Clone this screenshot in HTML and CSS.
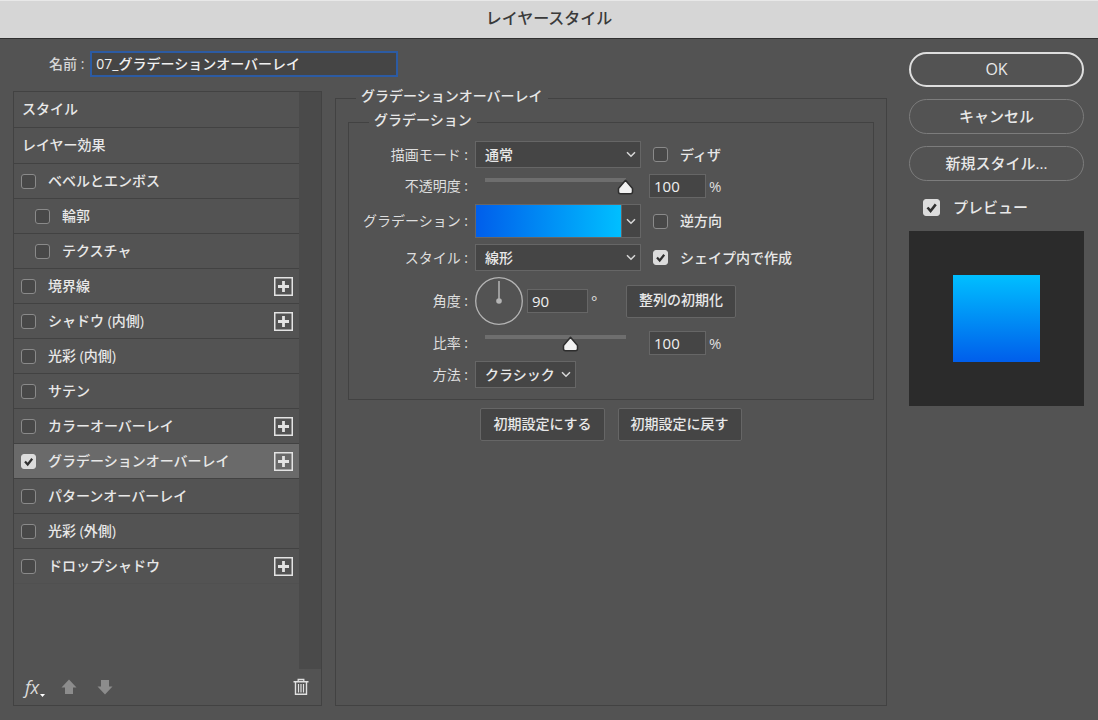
FILE: index.html
```html
<!DOCTYPE html>
<html lang="ja">
<head>
    <meta charset="UTF-8">
    <meta name="viewport" content="width=device-width, initial-scale=1.0">
    <title>レイヤースタイル</title>
    <link rel="stylesheet" href="styles.css">
</head>
<body>

    <!-- Shared icons -->
    <svg class="symbols" aria-hidden="true">
        <symbol id="plus" viewBox="0 0 19 19">
            <rect x="0.75" y="0.75" width="17.5" height="17.5" fill="none" stroke="#e4e4e4" stroke-width="1.5"/>
            <path d="M9.5 4v11M4 9.5h11" stroke="#e4e4e4" stroke-width="2.8"/>
        </symbol>
    </svg>

    <!-- Title bar -->
    <header class="titlebar">
        <h1>レイヤースタイル</h1>
    </header>

    <div class="dialog">
        <div class="main">
            <div class="name-row">
                <label for="styleName">名前 :</label>
                <input type="text" id="styleName" class="name-input" value="07_グラデーションオーバーレイ">
            </div>

            <div class="panes">
                <!-- Effect list -->
                <div class="effects">
                    <div class="effects-body">
                        <ul class="effect-list">
                            <li class="heading">スタイル</li>
                            <li class="heading">レイヤー効果</li>
                            <li><label><input type="checkbox" class="check">ベベルとエンボス</label></li>
                            <li class="child"><label><input type="checkbox" class="check">輪郭</label></li>
                            <li class="child"><label><input type="checkbox" class="check">テクスチャ</label></li>
                            <li><label><input type="checkbox" class="check">境界線</label><button class="add" aria-label="境界線を追加"><svg><use href="#plus"/></svg></button></li>
                            <li><label><input type="checkbox" class="check">シャドウ (内側)</label><button class="add" aria-label="シャドウ (内側)を追加"><svg><use href="#plus"/></svg></button></li>
                            <li><label><input type="checkbox" class="check">光彩 (内側)</label></li>
                            <li><label><input type="checkbox" class="check">サテン</label></li>
                            <li><label><input type="checkbox" class="check">カラーオーバーレイ</label><button class="add" aria-label="カラーオーバーレイを追加"><svg><use href="#plus"/></svg></button></li>
                            <li class="selected"><label><input type="checkbox" class="check" checked>グラデーションオーバーレイ</label><button class="add" aria-label="グラデーションオーバーレイを追加"><svg><use href="#plus"/></svg></button></li>
                            <li><label><input type="checkbox" class="check">パターンオーバーレイ</label></li>
                            <li><label><input type="checkbox" class="check">光彩 (外側)</label></li>
                            <li><label><input type="checkbox" class="check">ドロップシャドウ</label><button class="add" aria-label="ドロップシャドウを追加"><svg><use href="#plus"/></svg></button></li>
                        </ul>
                        <div class="gutter"></div>
                    </div>
                    <div class="toolbar">
                        <button class="tool fx" aria-label="効果メニュー">
                            <span>fx</span>
                            <svg width="5" height="3" viewBox="0 0 5 3"><path d="M0 0h5L2.500 3z" fill="#fff"/></svg>
                        </button>
                        <button class="tool" aria-label="上へ">
                            <svg width="16" height="16" viewBox="0 0 16 16"><path d="M8 0.500L15.500 8.500H12V15H4V8.500H0.500z" fill="#8c8c8c"/></svg>
                        </button>
                        <button class="tool" aria-label="下へ">
                            <svg width="16" height="16" viewBox="0 0 16 16"><path d="M8 15.500L15.500 7.500H12V1H4V7.500H0.500z" fill="#8c8c8c"/></svg>
                        </button>
                        <button class="tool trash" aria-label="削除">
                            <svg width="16" height="18" viewBox="0 0 16 18" fill="none" stroke="#e0e0e0">
                                <path d="M0.500 3.700H15.500M2.500 4V16.300H13.500V4" stroke-width="1.400"/>
                                <path d="M5.200 3.500V1.500H10.800V3.500" stroke-width="1.300"/>
                                <path d="M5.500 6v8.500M8 6v8.500M10.500 6v8.500" stroke-width="1.200"/>
                            </svg>
                        </button>
                    </div>
                </div>

                <!-- Settings -->
                <fieldset class="settings">
                    <legend>グラデーションオーバーレイ</legend>

                    <fieldset class="group">
                        <legend>グラデーション</legend>

                        <div class="row">
                            <label class="caption" for="blend">描画モード :</label>
                            <div class="control">
                                <select id="blend" class="select"><option>通常</option></select>
                            </div>
                            <label class="option"><input type="checkbox" class="check">ディザ</label>
                        </div>

                        <div class="row">
                            <label class="caption" for="opacity">不透明度 :</label>
                            <div class="control">
                                <input type="range" id="opacity" class="slider" min="0" max="100" value="100">
                            </div>
                            <input type="text" class="number" value="100" aria-label="不透明度 (%)">
                            <span class="unit">%</span>
                        </div>

                        <div class="row">
                            <span class="caption">グラデーション :</span>
                            <div class="control gradient">
                                <button class="swatch" aria-label="グラデーションを編集"></button>
                                <button class="swatch-menu" aria-label="グラデーションを選択">
                                    <svg width="10" height="7" viewBox="0 0 10 7"><path d="M1 1.200l4 4 4-4" fill="none" stroke="#d8d8d8" stroke-width="1.500"/></svg>
                                </button>
                            </div>
                            <label class="option"><input type="checkbox" class="check">逆方向</label>
                        </div>

                        <div class="row">
                            <label class="caption" for="gradStyle">スタイル :</label>
                            <div class="control">
                                <select id="gradStyle" class="select"><option>線形</option></select>
                            </div>
                            <label class="option"><input type="checkbox" class="check" checked>シェイプ内で作成</label>
                        </div>

                        <div class="row">
                            <label class="caption" for="angle">角度 :</label>
                            <div class="angle">
                                <svg width="48" height="48" viewBox="0 0 48 48">
                                    <circle cx="24" cy="24" r="23.300" fill="none" stroke="#b4b4b4" stroke-width="1.300"/>
                                    <path d="M24 24V4" stroke="#b4b4b4" stroke-width="1.500"/>
                                    <circle cx="24" cy="24" r="2.800" fill="#b4b4b4"/>
                                </svg>
                                <input type="text" id="angle" class="number" value="90">
                                <span class="unit">°</span>
                            </div>
                            <button class="btn">整列の初期化</button>
                        </div>

                        <div class="row">
                            <label class="caption" for="scale">比率 :</label>
                            <div class="control">
                                <input type="range" id="scale" class="slider" min="0" max="100" value="61">
                            </div>
                            <input type="text" class="number" value="100" aria-label="比率 (%)">
                            <span class="unit">%</span>
                        </div>

                        <div class="row">
                            <label class="caption" for="method">方法 :</label>
                            <div class="control">
                                <select id="method" class="select short"><option>クラシック</option></select>
                            </div>
                        </div>
                    </fieldset>

                    <div class="defaults">
                        <button class="btn">初期設定にする</button>
                        <button class="btn">初期設定に戻す</button>
                    </div>
                </fieldset>
            </div>
        </div>

        <!-- Actions -->
        <div class="actions">
            <button class="pill primary">OK</button>
            <button class="pill">キャンセル</button>
            <button class="pill">新規スタイル...</button>
            <label class="preview-toggle"><input type="checkbox" class="check" checked>プレビュー</label>
            <div class="preview"><div class="preview-shape"></div></div>
        </div>
    </div>

</body>
</html>
```
FILE: styles.css
```css
* {
    margin: 0;
    padding: 0;
    box-sizing: border-box;
}

body {
    display: flex;
    flex-direction: column;
    min-height: 100vh;
    font-family: "Open Sans", "Noto Sans CJK JP", sans-serif;
    font-size: 14px;
    font-weight: 500;
    line-height: 20px;
    color: #e8e8e8;
    background-color: #535353;
}

button,
input,
select {
    font: inherit;
    color: inherit;
}

.symbols {
    display: none;
}

/* Title bar */
.titlebar {
    height: 39px;
    background-color: #d6d6d6;
    border-top: 1px solid #e8e8e8;
    border-bottom: 1px solid #303030;
    text-align: center;
}

.titlebar h1 {
    font-size: 16px;
    font-weight: 500;
    line-height: 34px;
    color: #3a3a3a;
}

/* Dialog layout */
.dialog {
    flex: 1;
    display: flex;
    gap: 22px;
    padding: 12px 14px 14px 13px;
}

.main {
    flex: 1;
    display: flex;
    flex-direction: column;
    gap: 11px;
    min-width: 0;
}

.name-row {
    display: flex;
    align-items: center;
    gap: 6px;
    padding-left: 36px;
    color: #d6d6d6;
}

.name-input {
    width: 308px;
    height: 26px;
    padding: 0 4px 2px;
    border: 2px solid #2c5ba3;
    background-color: #454545;
    color: #f0f0f0;
    outline: none;
}

.panes {
    flex: 1;
    display: flex;
    gap: 13px;
}

/* Effect list */
.effects {
    width: 309px;
    margin-top: 3px;
    display: flex;
    flex-direction: column;
    border: 1px solid #424242;
}

.effects-body {
    flex: 1;
    display: flex;
}

.effect-list {
    flex: 1;
    list-style: none;
}

.effect-list li {
    display: flex;
    align-items: center;
    justify-content: space-between;
    height: 35px;
    padding: 0 6px 0 7px;
    border-bottom: 1px solid #424242;
}

.effect-list .heading {
    height: 36px;
    padding: 0 8px 2px;
}

.effect-list .child {
    padding-left: 21px;
}

.effect-list .selected {
    background-color: #6a6a6a;
}

.effect-list li:last-child {
    border-bottom-color: #505050;
}

.effect-list label {
    display: flex;
    align-items: center;
    gap: 12px;
}

.add {
    width: 19px;
    height: 19px;
    border: none;
    background: none;
}

.add svg {
    display: block;
    width: 19px;
    height: 19px;
}

.gutter {
    width: 22px;
    background-color: #4a4a4a;
}

.toolbar {
    display: flex;
    align-items: center;
    gap: 20px;
    height: 36px;
    padding: 0 12px 0 11px;
}

.tool {
    display: flex;
    align-items: center;
    border: none;
    background: none;
}

.fx {
    align-items: flex-end;
    gap: 1px;
    margin-right: -4px;
    font-size: 18px;
    font-weight: 400;
    font-style: italic;
    color: #dadada;
}

.trash {
    margin-left: auto;
}

/* Checkbox */
.check {
    appearance: none;
    flex: none;
    width: 15px;
    height: 15px;
    border: 1px solid #8a8a8a;
    border-radius: 3px;
    background-color: #484848;
}

.check:checked {
    border-color: #dcdcdc;
    background: #dcdcdc url("data:image/svg+xml,%3Csvg xmlns='http://www.w3.org/2000/svg' viewBox='0 0 13 13'%3E%3Cpath d='M3 6.500l2.700 3L10.200 3.800' fill='none' stroke='%23303030' stroke-width='2.200'/%3E%3C/svg%3E") center / 100% no-repeat;
}

/* Settings */
fieldset {
    border: 1px solid #424242;
    min-width: 0;
}

legend {
    margin-left: 20px;
    padding: 0 5px 4px;
    line-height: 16px;
}

.settings {
    flex: 1;
    padding: 4px 12px 12px;
}

.settings > legend {
    margin-left: 8px;
}

.group {
    display: flex;
    flex-direction: column;
    gap: 6px;
    padding: 9px 0 11px;
}

.row {
    display: flex;
    align-items: center;
}

.caption {
    width: 119px;
    margin-right: 7px;
    text-align: right;
    font-weight: 400;
    color: #dedede;
}

.control {
    width: 166px;
    margin-right: 8px;
}

.select {
    appearance: none;
    display: block;
    width: 100%;
    height: 27px;
    padding: 0 16px 0 9px;
    border: 1px solid #666;
    background: #454545 url("data:image/svg+xml,%3Csvg xmlns='http://www.w3.org/2000/svg' width='10' height='7'%3E%3Cpath d='M1 1.200l4 4 4-4' fill='none' stroke='%23d8d8d8' stroke-width='1.500'/%3E%3C/svg%3E") right 4px center no-repeat;
}

.short {
    width: 101px;
}

.option {
    display: flex;
    align-items: center;
    gap: 12px;
    padding-left: 4px;
}

.slider {
    appearance: none;
    display: block;
    width: 158px;
    height: 24px;
    margin-left: 1px;
    background: linear-gradient(#6e6e6e, #6e6e6e) center 4px / 141px 4px no-repeat;
}

.slider::-webkit-slider-runnable-track {
    height: 24px;
}

.slider::-webkit-slider-thumb {
    appearance: none;
    width: 17px;
    height: 16px;
    margin-top: 5px;
    background: url("data:image/svg+xml,%3Csvg xmlns='http://www.w3.org/2000/svg' viewBox='0 0 17 16'%3E%3Cpath d='M8.500 1.200L15.500 9.500V12.800Q15.500 14.800 13.500 14.800H3.500Q1.500 14.800 1.500 12.800V9.500Z' fill='%23f2f2f2' stroke='%232e2e2e' stroke-width='1.500' stroke-linejoin='round'/%3E%3C/svg%3E") no-repeat;
}

.number {
    width: 57px;
    height: 24px;
    padding: 0 4px 1px;
    border: 1px solid #666;
    background-color: #454545;
    font-size: 15px;
    color: #f0f0f0;
}

.unit {
    margin-left: 3px;
    font-size: 15px;
    font-weight: 400;
    color: #dedede;
}

.gradient {
    display: flex;
    height: 34px;
    border: 1px solid #666;
}

.swatch {
    flex: 1;
    border: none;
    background: linear-gradient(to right, #005eeb, #00bfff);
}

.swatch-menu {
    display: flex;
    align-items: center;
    justify-content: center;
    width: 19px;
    border: none;
    border-left: 1px solid #666;
    background-color: #454545;
}

.angle {
    display: flex;
    align-items: center;
    width: 151px;
}

.angle .number {
    width: 61px;
    margin-left: 4px;
}

.btn {
    height: 33px;
    padding: 0 12px 2px;
    border: 1px solid #666;
    border-radius: 2px;
    background-color: #454545;
}

.defaults {
    display: flex;
    justify-content: center;
    gap: 13px;
    margin-top: 8px;
}

/* Actions */
.actions {
    display: flex;
    flex-direction: column;
    gap: 12px;
    width: 175px;
    padding-top: 1px;
    font-size: 15px;
}

.pill {
    height: 35px;
    padding-bottom: 2px;
    border: 1px solid #7c7c7c;
    border-radius: 18px;
    background: none;
}

.primary {
    border: 2px solid #dedede;
    font-size: 16px;
}

.preview-toggle {
    display: flex;
    align-items: center;
    gap: 13px;
    padding: 4px 14px 2px;
}

.preview-toggle .check {
    width: 17px;
    height: 17px;
}

.preview {
    display: flex;
    align-items: center;
    justify-content: center;
    aspect-ratio: 1;
    background-color: #2b2b2b;
}

.preview-shape {
    width: 50%;
    height: 50%;
    background: linear-gradient(#00bfff, #005eeb);
}
```
